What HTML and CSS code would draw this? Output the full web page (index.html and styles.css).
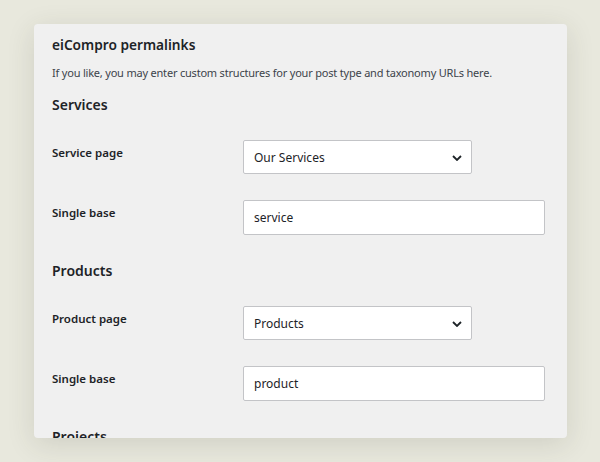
FILE: index.html
```html
<!DOCTYPE html>
<html lang="en">
<head>
    <meta charset="UTF-8">
    <meta name="viewport" content="width=device-width, initial-scale=1.0">
    <title>eiCompro permalinks</title>
    <link rel="stylesheet" href="styles.css">
</head>
<body>
    <div class="card">
        <h1>eiCompro permalinks</h1>
        <p class="description">If you like, you may enter custom structures for your post type and taxonomy URLs here.</p>

        <h2>Services</h2>
        <div class="form-row">
            <label for="service-page">Service page</label>
            <div class="select-wrap">
                <select id="service-page">
                    <option>Our Services</option>
                </select>
                <svg class="chevron" width="10" height="6" viewBox="0 0 10 6"><path d="M1 1l4 4 4-4" fill="none" stroke="#1d2327" stroke-width="1.8"/></svg>
            </div>
        </div>
        <div class="form-row">
            <label for="service-base">Single base</label>
            <input type="text" id="service-base" value="service">
        </div>

        <h2>Products</h2>
        <div class="form-row">
            <label for="product-page">Product page</label>
            <div class="select-wrap">
                <select id="product-page">
                    <option>Products</option>
                </select>
                <svg class="chevron" width="10" height="6" viewBox="0 0 10 6"><path d="M1 1l4 4 4-4" fill="none" stroke="#1d2327" stroke-width="1.8"/></svg>
            </div>
        </div>
        <div class="form-row">
            <label for="product-base">Single base</label>
            <input type="text" id="product-base" value="product">
        </div>

        <h2 class="cut">Projects</h2>
    </div>
</body>
</html>
```

FILE: styles.css
```css
:root {
    --page-background: #e8e8dd;
    --card-background: #f0f0f0;
    --text-color: #1d2327;
    --muted-color: #3c434a;
    --border-color: #c3c4c7;
}

* {
    box-sizing: border-box;
    margin: 0;
    padding: 0;
}

body {
    font-family: 'Noto Sans', Arial, sans-serif;
    background-color: var(--page-background);
    color: var(--text-color);
    padding: 24px 34px;
}

.card {
    background-color: var(--card-background);
    width: 533px;
    height: 414px;
    overflow: hidden;
    border-radius: 4px;
    padding: 10px 18px 0;
    box-shadow: 0 6px 28px rgba(60, 60, 40, 0.14);
}

h1 {
    font-size: 13.7px;
    font-weight: 600;
    line-height: 22px;
}

.description {
    font-size: 11px;
    letter-spacing: -0.2px;
    line-height: 18px;
    color: var(--muted-color);
    margin-top: 8px;
}

h2 {
    font-size: 14px;
    font-weight: 600;
    line-height: 20px;
    margin: 13px 0 12px;
}

.form-row {
    display: grid;
    grid-template-columns: 191px 1fr;
    align-items: start;
    padding: 13px 0;
}

label {
    font-size: 11.5px;
    font-weight: 600;
    line-height: 18px;
    margin-top: 4px;
}

.select-wrap {
    position: relative;
    width: 229px;
}

select,
input[type="text"] {
    display: block;
    font-family: inherit;
    font-size: 12px;
    color: var(--text-color);
    background-color: #fff;
    border: 1px solid var(--border-color);
    border-radius: 2px;
    padding: 0 10px;
}

select {
    width: 229px;
    height: 34px;
    appearance: none;
}

input[type="text"] {
    width: 302px;
    height: 35px;
}

.chevron {
    position: absolute;
    right: 10px;
    top: 15px;
    pointer-events: none;
}
```
